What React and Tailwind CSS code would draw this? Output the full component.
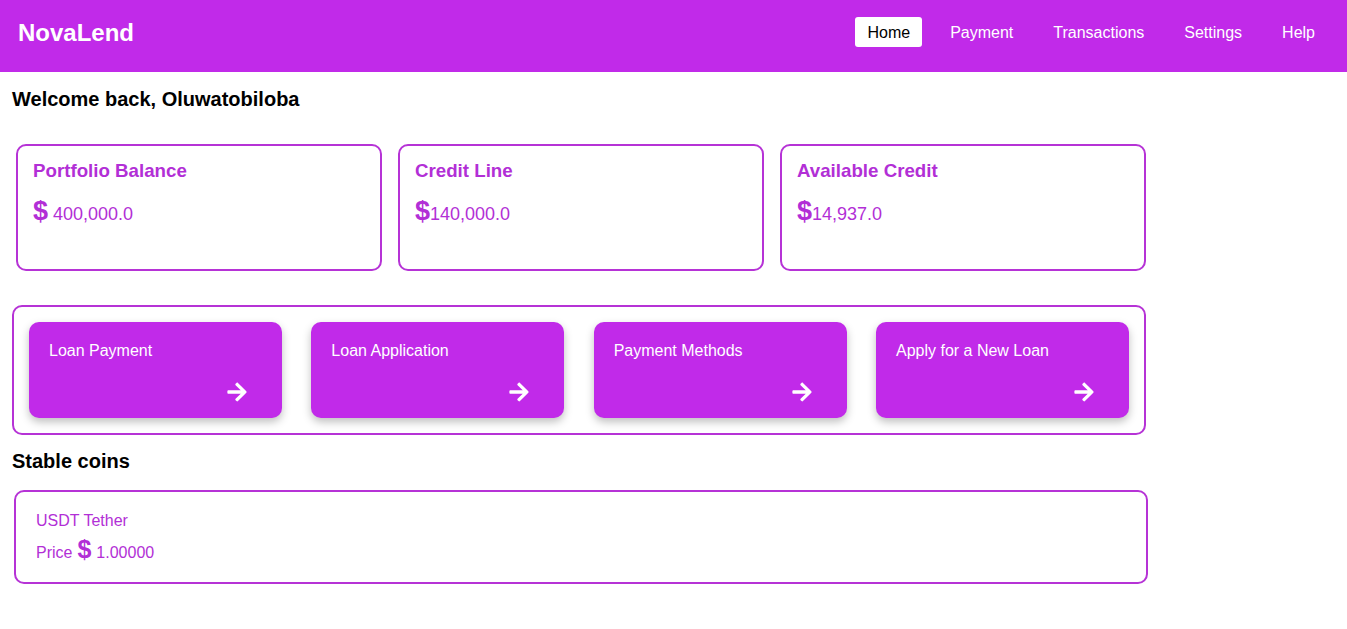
import React from "react";
import { FaArrowRight } from "react-icons/fa";

const balances = [
    { id: 1, title: "Portfolio Balance", amount: "400,000.0", spaced: true },
    { id: 2, title: "Credit Line", amount: "140,000.0", spaced: false },
    { id: 3, title: "Available Credit", amount: "14,937.0", spaced: false },
];

const actions = ["Loan Payment", "Loan Application", "Payment Methods", "Apply for a New Loan"];

const navItems = ["Home", "Payment", "Transactions", "Settings", "Help"];

const App = () => {
    return (
        <div className="min-h-screen bg-white font-['Liberation_Sans',Arial,sans-serif]">
            <header className="h-[72px] bg-[#c12ae9] flex justify-between items-start px-[18px] pt-[17px]">
                <h1 className="text-white text-2xl font-bold h-[30px] leading-[32px]">NovaLend</h1>
                <nav className="flex gap-4 mr-[2px]">
                    {navItems.map((item) => (
                        <a
                            key={item}
                            href="#"
                            className={
                                item === "Home"
                                    ? "bg-white text-black rounded-[3px] px-3 h-[30px] leading-[31px] text-base"
                                    : "text-white px-3 h-[30px] leading-[31px] text-base"
                            }
                        >
                            {item}
                        </a>
                    ))}
                </nav>
            </header>

            <main className="px-3">
                <h2 className="mt-[16px] text-xl leading-[23px] font-bold text-black">
                    Welcome back, Oluwatobiloba
                </h2>

                <div className="flex gap-4 pl-1 mt-[33px]">
                    {balances.map((b) => (
                        <div
                            key={b.id}
                            className="w-[366px] h-[127px] border-2 border-[#b633d6] rounded-[10px] px-[15px] pt-[14px]"
                        >
                            <h3 className="text-[18.72px] leading-[22px] font-bold text-[#b22fd6]">{b.title}</h3>
                            <p className="mt-[14px] flex items-baseline text-[#b22fd6]">
                                <span className="text-[27px] leading-[30px] font-bold">$</span>
                                <span className={b.spaced ? "text-lg ml-[5px]" : "text-lg"}>{b.amount}</span>
                            </p>
                        </div>
                    ))}
                </div>

                <div className="w-[1134px] mt-[34px] border-2 border-[#b633d6] rounded-[10px] p-[15px] flex justify-between">
                    {actions.map((a) => (
                        <div
                            key={a}
                            className="w-[253px] h-[96px] bg-[#c12ae9] rounded-[10px] shadow-[0_4px_8px_rgba(0,0,0,0.25)] flex flex-col justify-between pl-5 pr-[34px] pt-[20px] pb-[15px]"
                        >
                            <p className="text-white text-base leading-[18px]">{a}</p>
                            <div className="flex justify-end">
                                <FaArrowRight className="text-white" size={22} />
                            </div>
                        </div>
                    ))}
                </div>

                <h2 className="mt-[15px] text-xl leading-[23px] font-bold text-black">Stable coins</h2>

                <div className="ml-[2px] w-[1134px] h-[94px] mt-[17px] border-2 border-[#b633d6] rounded-[10px] pl-5 pt-[20px] text-[#b22fd6]">
                    <p className="text-base leading-[18px]">USDT Tether</p>
                    <p className="mt-[6px] flex items-baseline text-base">
                        <span>Price</span>
                        <span className="ml-[5px] text-[25px] leading-[26px] font-bold">$</span>
                        <span className="ml-[5px]">1.00000</span>
                    </p>
                </div>
            </main>
        </div>
    );
};

export default App;
